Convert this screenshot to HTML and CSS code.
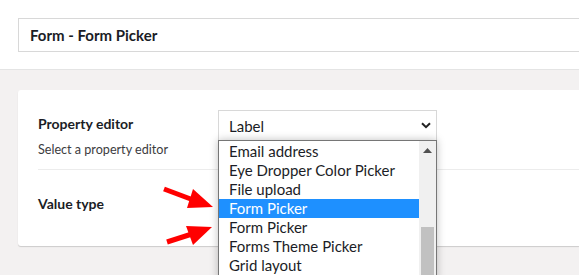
FILE: index.html
```html
<!DOCTYPE html>
<html lang="en">
<head>
    <meta charset="UTF-8">
    <title>Form Picker</title>
    <link rel="stylesheet" href="styles.css">
</head>
<body>
    <div class="header">
        <div class="name-input">Form - Form Picker</div>
    </div>
    <div class="editor">
        <div class="card">
            <div class="row">
                <div class="label">
                    <div class="label-title">Property editor</div>
                    <div class="label-desc">Select a property editor</div>
                </div>
                <div class="control">
                    <div class="select">
                        <span>Label</span>
                        <svg class="chevron" width="10" height="7" viewBox="0 0 10 7"><path d="M1 1.2 L5 5.2 L9 1.2" fill="none" stroke="#222" stroke-width="2"/></svg>
                    </div>
                    <div class="dropdown">
                        <ul class="options">
                            <li>Email address</li>
                            <li>Eye Dropper Color Picker</li>
                            <li>File upload</li>
                            <li class="selected">Form Picker</li>
                            <li>Form Picker</li>
                            <li>Forms Theme Picker</li>
                            <li>Grid layout</li>
                        </ul>
                        <div class="scrollbar">
                            <svg class="scroll-up" width="9" height="5" viewBox="0 0 9 5"><path d="M0 5 L4.5 0 L9 5 Z" fill="#505050"/></svg>
                            <div class="thumb"></div>
                        </div>
                    </div>
                </div>
            </div>
            <div class="row last">
                <div class="label">
                    <div class="label-title">Value type</div>
                </div>
            </div>
        </div>
    </div>
    <svg class="arrows" width="579" height="275" viewBox="0 0 579 275">
        <!-- arrow to the selected Form Picker -->
        <line x1="164" y1="189" x2="196" y2="201" stroke="#ff0000" stroke-width="5"/>
        <polygon points="213,207 193,189 187,208" fill="#ff0000"/>
        <!-- arrow to the second Form Picker -->
        <line x1="167" y1="242" x2="195" y2="233" stroke="#ff0000" stroke-width="5"/>
        <polygon points="212,227 186,226 193,245" fill="#ff0000"/>
    </svg>
</body>
</html>
```

FILE: styles.css
```css
body {
    margin: 0;
    font-family: 'Lato', sans-serif;
    color: #1b1d26;
    background-color: #f3f1f1;
    overflow: hidden;
    height: 275px;
    position: relative;
}
.header {
    background-color: #fff;
    padding: 18px 0 17px 18px;
    border-bottom: 1px solid #e4e4e4;
}
.name-input {
    height: 32px;
    border: 1px solid #d8d8d8;
    border-right: none;
    padding-left: 11px;
    font-size: 15px;
    font-weight: 700;
    line-height: 32px;
}
.editor {
    padding: 20px 0 0 18px;
}
.card {
    background-color: #fff;
    border-radius: 3px 0 0 3px;
    box-shadow: 0 1px 1px rgba(0, 0, 0, 0.16);
    padding: 0 0 0 20px;
    height: 156px;
}
.row {
    display: flex;
    box-sizing: border-box;
    height: 80px;
    padding-top: 20px;
    border-bottom: 1px solid #ececec;
}
.row.last {
    border-bottom: none;
    padding-top: 25px;
}
.label {
    width: 180px;
    padding-top: 5px;
}
.last .label {
    padding-top: 0;
}
.label-title {
    font-size: 14px;
    font-weight: 700;
    line-height: 18px;
}
.label-desc {
    font-size: 12.6px;
    color: #3c3c40;
    margin-top: 9px;
    line-height: 16px;
}
.control {
    position: relative;
}
.select {
    width: 207px;
    height: 29px;
    border: 1px solid #d8d8d8;
    padding: 0 0 0 10px;
    display: flex;
    align-items: center;
    justify-content: space-between;
    font-size: 15px;
    color: #1b1d26;
}
.chevron {
    margin-right: 5px;
}
.dropdown {
    position: absolute;
    top: 30px;
    left: 0;
    width: 217px;
    height: 140px;
    border: 1px solid #767676;
    background-color: #fff;
    box-shadow: 0 0 8px rgba(0, 0, 0, 0.25);
    display: flex;
    z-index: 2;
}
.options {
    list-style: none;
    margin: 0;
    padding: 1px 0 0;
    flex: 1;
}
.options li {
    height: 19px;
    line-height: 19px;
    padding-left: 10px;
    font-size: 15px;
    color: #1b1d26;
    white-space: nowrap;
}
.options li.selected {
    background-color: #1e90ff;
    color: #fff;
}
.scrollbar {
    width: 17px;
    background-color: #f0f0f0;
    position: relative;
}
.scroll-up {
    position: absolute;
    top: 7px;
    left: 4px;
}
.thumb {
    position: absolute;
    top: 86px;
    left: 2px;
    width: 13px;
    bottom: 0;
    background-color: #c1c1c1;
}
.arrows {
    position: absolute;
    top: 0;
    left: 0;
    z-index: 3;
}
```
